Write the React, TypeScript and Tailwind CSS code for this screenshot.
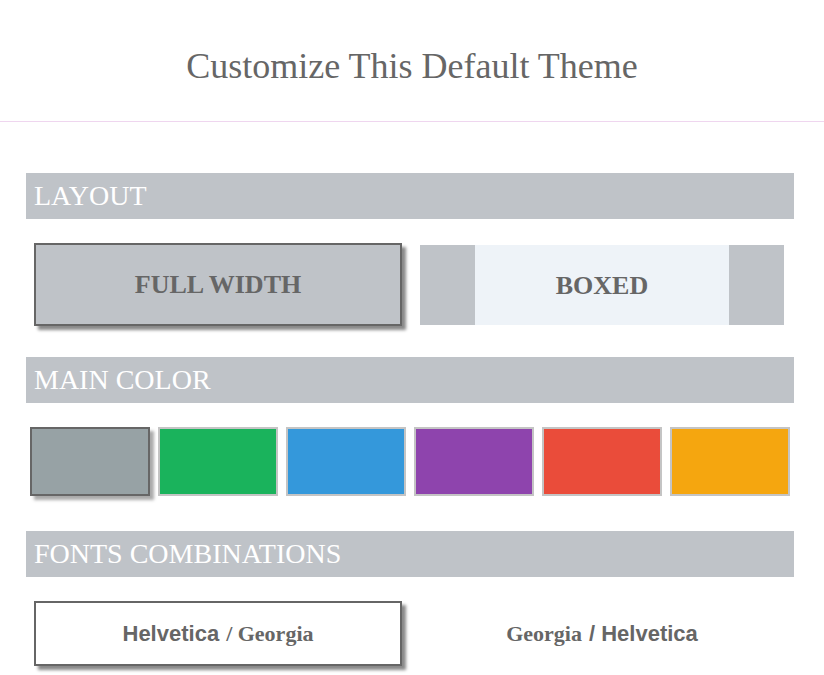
import React from "react";

const serif = { fontFamily: '"Liberation Serif", "Times New Roman", serif' };

function Header({ children }: { children: React.ReactNode }) {
  return (
    <div
      className="h-[46px] bg-[#bfc3c8] text-white text-[28px] leading-[46px] pl-[8px] font-['Liberation_Serif',serif]"
    >
      {children}
    </div>
  );
}

const colors = ["#97a2a5", "#1ab35c", "#3498db", "#8e44ad", "#ea4c3a", "#f5a60f"];

export default function App() {
  return (
    <div className="w-[824px] h-[675px] bg-white overflow-hidden font-['Liberation_Serif',serif]">
      <div className="h-[121px] flex items-center justify-center">
        <h1 className="text-[36px] text-[#666] font-['Liberation_Serif',serif] mt-[10px]" style={serif}>
          Customize This Default Theme
        </h1>
      </div>
      <div className="h-px bg-[#efd6ef]" />
      <div className="ml-[26px] w-[768px] pt-[51px]">
        <Header>LAYOUT</Header>
        <div className="grid grid-cols-2 mt-[24px]">
          <div className="px-[8px]">
            <div className="h-[83px] border-2 border-[#666] bg-[#bfc3c8] shadow-[4px_4px_3px_#8a8a8a] flex items-center justify-center">
              <span className="text-[26px] font-bold text-[#666] font-['Liberation_Serif',serif]">FULL WIDTH</span>
            </div>
          </div>
          <div className="px-[10px] pt-[2px]">
            <div className="h-[80px] flex bg-[#bfc3c8]">
              <div className="w-[55px]" />
              <div className="flex-1 bg-[#eef3f8] flex items-center justify-center">
                <span className="text-[26px] font-bold text-[#666] font-['Liberation_Serif',serif]">BOXED</span>
              </div>
              <div className="w-[55px]" />
            </div>
          </div>
        </div>
        <div className="mt-[31px]">
          <Header>MAIN COLOR</Header>
        </div>
        <div className="grid grid-cols-6 mt-[24px]">
          {colors.map((c, i) => (
            <div key={i} className="px-[4px]">
              <div
                className={
                  i === 0
                    ? "h-[69px] border-2 border-[#666] shadow-[4px_4px_3px_#aaa]"
                    : "h-[69px] border-2 border-[#c4c4c4]"
                }
                style={{ backgroundColor: c }}
              />
            </div>
          ))}
        </div>
        <div className="mt-[35px]">
          <Header>FONTS COMBINATIONS</Header>
        </div>
        <div className="grid grid-cols-2 mt-[24px]">
          <div className="px-[8px]">
            <div className="h-[65px] border-2 border-[#666] bg-white shadow-[4px_4px_3px_#8a8a8a] flex items-center justify-center text-[#666] font-bold">
              <span className="text-[22px] font-['Liberation_Sans',sans-serif]">Helvetica</span>
              <span className="text-[22px] font-['Liberation_Serif',serif] ml-[7px]">/ Georgia</span>
            </div>
          </div>
          <div className="px-[8px]">
            <div className="h-[65px] flex items-center justify-center text-[#666] font-bold">
              <span className="text-[22px] font-['Liberation_Serif',serif]">Georgia</span>
              <span className="text-[22px] font-['Liberation_Sans',sans-serif] ml-[7px]">/ Helvetica</span>
            </div>
          </div>
        </div>
      </div>
    </div>
  );
}
